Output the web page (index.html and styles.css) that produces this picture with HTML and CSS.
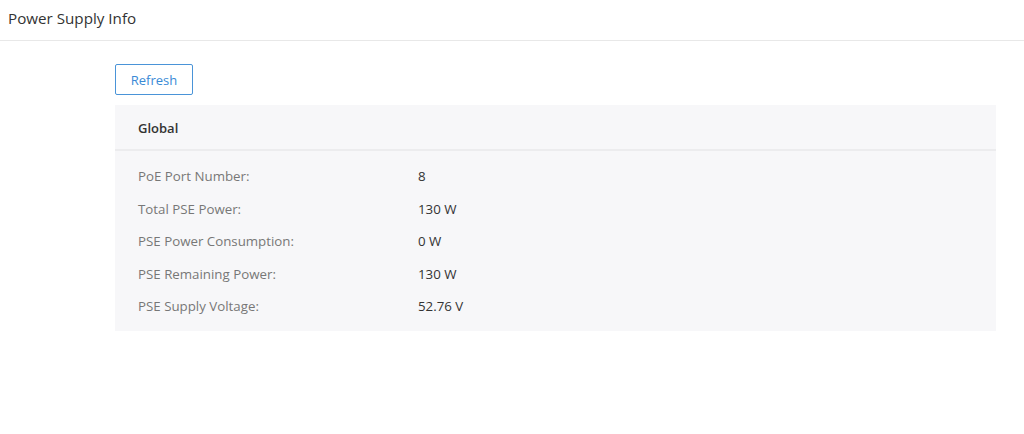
FILE: index.html
```html
<!DOCTYPE html>
<html lang="en">
<head>
    <meta charset="UTF-8">
    <title>Power Supply Info</title>
    <link rel="stylesheet" href="styles.css">
</head>
<body>

<div class="page-header">
    <span class="page-title">Power Supply Info</span>
</div>

<div class="content">
    <button class="btn-refresh">Refresh</button>

    <div class="panel">
        <div class="panel-head">Global</div>
        <div class="panel-body">
            <div class="info-row"><span class="info-label">PoE Port Number:</span><span class="info-value">8</span></div>
            <div class="info-row"><span class="info-label">Total PSE Power:</span><span class="info-value">130 W</span></div>
            <div class="info-row"><span class="info-label">PSE Power Consumption:</span><span class="info-value">0 W</span></div>
            <div class="info-row"><span class="info-label">PSE Remaining Power:</span><span class="info-value">130 W</span></div>
            <div class="info-row"><span class="info-label">PSE Supply Voltage:</span><span class="info-value">52.76 V</span></div>
        </div>
    </div>
</div>

</body>
</html>
```

FILE: styles.css
```css
body {
    margin: 0;
    padding: 0;
    font-family: "Open Sans", Arial, sans-serif;
    background: #fff;
    color: #333;
}

.page-header {
    height: 41px;
    border-bottom: 1px solid #e8e8e8;
    display: flex;
    align-items: center;
    padding-left: 8px;
    padding-bottom: 4px;
    box-sizing: border-box;
}

.page-title {
    font-size: 15.2px;
    color: #333;
}

.content {
    padding: 23px 28px 0 115px;
}

.btn-refresh {
    font-family: inherit;
    font-size: 13px;
    color: #3a8ad6;
    background: #fff;
    border: 1px solid #4a94d8;
    border-radius: 2px;
    width: 78px;
    height: 31px;
    padding: 0;
    cursor: pointer;
}

.panel {
    margin-top: 10px;
    background: #f7f7f9;
    width: 881px;
}

.panel-head {
    height: 46px;
    line-height: 46px;
    padding-left: 23px;
    font-size: 13px;
    font-weight: 600;
    color: #333;
    border-bottom: 2px solid #ececee;
    box-sizing: border-box;
}

.panel-body {
    padding: 9px 0 8px 23px;
}

.info-row {
    display: flex;
    height: 32.5px;
    align-items: center;
    font-size: 13.3px;
}

.info-label {
    width: 280px;
    color: #777;
}

.info-value {
    color: #333;
}
```
